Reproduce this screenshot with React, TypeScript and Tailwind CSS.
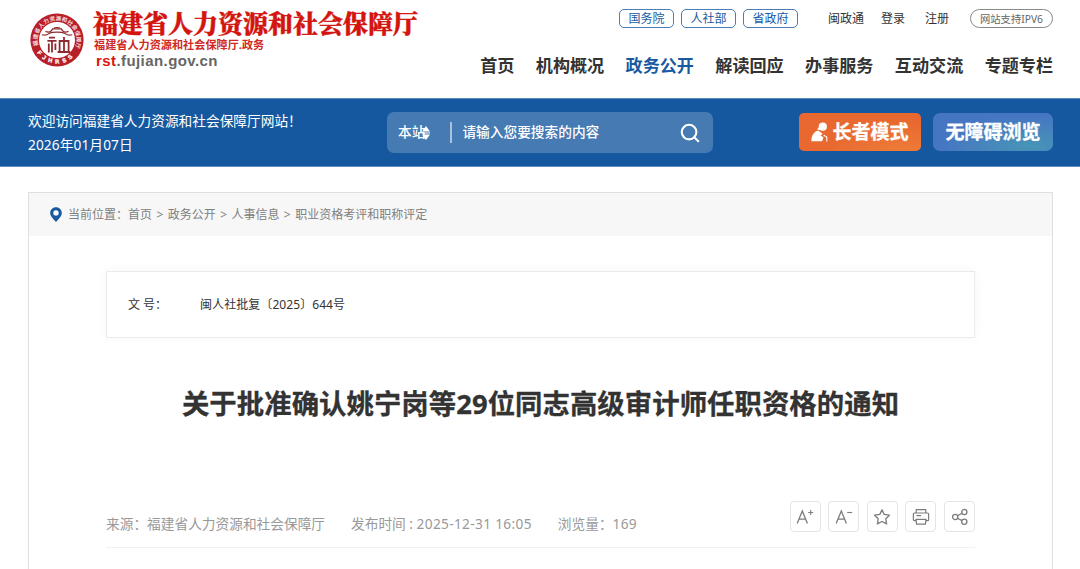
import React from 'react';
import { Search } from 'lucide-react';

const portals = ['国务院', '人社部', '省政府'];

const navItems = ['首页', '机构概况', '政务公开', '解读回应', '办事服务', '互动交流', '专题专栏'];

const crumbs = ['首页', '政务公开', '人事信息', '职业资格考评和职称评定'];

const Seal: React.FC = () => (
  <svg viewBox="0 0 54 54" className="w-[54px] h-[54px] shrink-0 overflow-visible">
    <defs>
      <path id="ringTop" d="M 8.2 32.5 A 19.6 19.6 0 1 1 45.8 32.5" />
      <path id="ringBottom" d="M 5.6 36.5 A 23.4 23.4 0 0 0 48.4 36.5" />
    </defs>
    <circle cx="27" cy="27" r="26.6" fill="#b81f28" />
    <circle cx="27" cy="27" r="18" fill="#fff" />
    <text fontSize="5.6" fontWeight="700" fill="#f6dfe0" textLength="75" lengthAdjust="spacing">
      <textPath href="#ringTop">福建省人力资源和社会保障厅</textPath>
    </text>
    <text fontSize="5.8" fontWeight="700" fill="#fff" stroke="#fff" strokeWidth="0.3" fontFamily="Liberation Sans, sans-serif" letterSpacing="3.6">
      <textPath href="#ringBottom" startOffset="3.5">FJHRSS</textPath>
    </text>
    <g fill="none" stroke="#8f2b30">
      {/* roof */}
      <path d="M15.500 18.400c3 1.300 5.700.6 7.300-2.600h8.400c1.600 3.200 4.300 3.900 7.300 2.600" strokeWidth="1.3" />
      <path d="M11.800 21.800c2.500.8 5.200.4 7.400-1.400 3-1.800 12.600-1.800 15.600 0 2.200 1.800 4.900 2.200 7.400 1.400" strokeWidth="1.2" />
      <path d="M23.800 15.500c.6-1.400 5.800-1.400 6.400 0" strokeWidth="1.1" />
      {/* columns */}
      <path d="M19 24.600h6M17.400 27.800h9.200M22 27.800v11.700M18.800 30.600v8.900M25.400 30.600v6.400M34 24v14.400M29.600 38.800v-10.800h9v10.800M27.600 39h12.600" strokeWidth="1.8" />
    </g>
  </svg>
);

const ElderIcon: React.FC = () => (
  <svg viewBox="0 0 17 20" className="w-[17px] h-[20px] shrink-0" fill="#fff">
    <circle cx="11.8" cy="4.7" r="4.1" />
    <path d="M7.700 4.900L6.200 7.600l3.200.6z" />
    <path d="M.400 19.200C.200 14 3 9.300 7.300 8.400c1.500 1.400 3.200 2.100 4.300 3.100l-2 2.300 2.900 1.500-1.300 3.900z" />
    <path d="M13.800 14.200h.7c.8 0 1.300.5 1.300 1.200v4M12.600 13.600h1.500" fill="none" stroke="#fff" strokeWidth="1.1" />
  </svg>
);

const ToolButton: React.FC<{ children: React.ReactNode }> = ({ children }) => (
  <button className="w-[31px] h-[31px] rounded-[4px] border border-[#e4e4e4] bg-white flex items-center justify-center text-[#7c7c7c]">
    {children}
  </button>
);

const FontSizeIcon: React.FC<{ plus?: boolean }> = ({ plus }) => (
  <svg viewBox="0 0 20 20" className="w-5 h-5" fill="none" stroke="currentColor" strokeWidth="1.3">
    <path d="M2.200 16.600L7.300 3.900l5.100 12.700M4 12.200h6.600" />
    <path d={plus ? 'M13.200 5.500h5M15.700 3v5' : 'M13.200 5.500h5'} strokeWidth="1.1" />
  </svg>
);

const StarIcon: React.FC = () => (
  <svg viewBox="0 0 20 20" className="w-5 h-5" fill="none" stroke="currentColor" strokeWidth="1.3" strokeLinejoin="round">
    <path d="M10 2.900l2.200 4.500 5.200.8-3.600 3.600.8 5-4.600-2.300-4.600 2.300.8-5-3.600-3.600 5.200-.8z" />
  </svg>
);

const PrintIcon: React.FC = () => (
  <svg viewBox="0 0 20 20" className="w-5 h-5" fill="none" stroke="currentColor" strokeWidth="1.2" strokeLinejoin="round">
    <path d="M5.200 5.900V2.700h9.600v3.200" />
    <path d="M5.400 13.700H3.400a1 1 0 0 1-1-1V7a1 1 0 0 1 1-1h13.200a1 1 0 0 1 1 1v5.700a1 1 0 0 1-1 1h-2M5.500 8.700h4.600" />
    <path d="M4.900 12.400h10.200l-.7 4.700H5.600z" />
  </svg>
);

const ShareIcon: React.FC = () => (
  <svg viewBox="0 0 20 20" className="w-5 h-5" fill="none" stroke="currentColor" strokeWidth="1.3">
    <circle cx="5.200" cy="10" r="2.600" />
    <circle cx="14.300" cy="5" r="2.600" />
    <circle cx="14.300" cy="14.800" r="2.600" />
    <path d="M7.500 8.700L12 6.200M7.500 11.200l4.500 2.400" />
  </svg>
);

const Header: React.FC = () => (
  <header className="h-[98px] pl-[30px] pr-[27px] flex justify-between bg-white">
    <div className="flex pt-[13px] gap-[9px]">
      <Seal />
      <div className="-mt-[5px] whitespace-nowrap">
        <div className="text-[25px] leading-[29px] font-black text-[#d3140f] [-webkit-text-stroke:0.4px_#d3140f] font-['Noto_Serif_CJK_SC','Noto_Sans_CJK_SC',serif]">
          福建省人力资源和社会保障厅
        </div>
        <div className="pt-px pl-px text-[11.15px] leading-[14px] font-bold text-[#d02a24]">
          福建省人力资源和社会保障厅.政务
        </div>
        <div className="pl-[3px] text-[15px] leading-[17px] font-bold text-[#666] tracking-[0.42px] font-['Liberation_Sans',sans-serif]">
          <span className="text-[#d9150f]">rst</span>.fujian.gov.cn
        </div>
      </div>
    </div>

    <div className="pt-[9px]">
      <div className="flex items-center justify-end h-[19px] text-[12px] text-[#333]">
        <div className="flex gap-[7px] mr-[30px]">
          {portals.map(p => (
            <a key={p} className="w-[55px] h-[19px] rounded-[5px] border border-[#4a7cb5] text-[#1a5aa2] leading-[17px] text-center">{p}</a>
          ))}
        </div>
        <a>闽政通</a>
        <a className="ml-[17px]">登录</a>
        <a className="ml-5">注册</a>
        <a className="ml-[21px] w-[83px] h-[19px] rounded-full border border-[#888] text-[10.3px] leading-[18px] text-center text-[#666]">
          网站支持IPV6
        </a>
      </div>
      <nav className="mt-[26px] flex justify-end gap-[21.4px] text-[17.1px] leading-[24px] font-bold text-[#333]">
        {navItems.map(item => (
          <a key={item} className={item === '政务公开' ? 'text-[#1859a0]' : ''}>{item}</a>
        ))}
      </nav>
    </div>
  </header>
);

const SearchBar: React.FC = () => (
  <div className="h-[69px] pl-7 pr-[27px] flex items-start bg-[#16589f] border-y border-[#5f8dbe] text-white">
    <div className="w-[359px] pt-[10px] text-[13.7px] leading-6">
      <p>欢迎访问福建省人力资源和社会保障厅网站！</p>
      <p className="tracking-[0.1px]">2026年01月07日</p>
    </div>
    <div className="mt-[13px] w-[326px] h-[41px] rounded-[7px] bg-[#457ab3] flex items-center pl-[11px] pr-[12px] text-[13.7px] font-medium">
      <span>本站</span>
      <svg viewBox="0 0 8 14" className="-ml-[3px] w-2 h-[14px]" fill="#fff">
        <path d="M4 0l4 5.500H0zM4 14l4-5.500H0zM0 6.500h8v1H0z" />
      </svg>
      <span className="ml-[20px] w-[2px] h-[21px] bg-[#a9c2dd]" />
      <span className="ml-[10px]">请输入您要搜索的内容</span>
      <Search className="ml-auto" size={22} strokeWidth={2.3} />
    </div>
    <div className="mt-[14px] ml-auto flex gap-3 text-[19px] font-bold">
      <button className="w-[122px] h-[38px] rounded-[5px] bg-[radial-gradient(ellipse_at_85%_100%,#ee7c38_0%,#e86830_55%)] flex items-center justify-center gap-[4px] whitespace-nowrap">
        <ElderIcon />
        <span className="[-webkit-text-stroke:0.3px_#fff]">长者模式</span>
      </button>
      <button className="w-[120px] h-[38px] rounded-[7px] bg-[radial-gradient(ellipse_at_80%_85%,#4795b7_0%,#4676c2_65%)] text-center [-webkit-text-stroke:0.3px_#fff]">
        无障碍浏览
      </button>
    </div>
  </div>
);

const Breadcrumb: React.FC = () => (
  <div className="h-[43px] pl-[21px] flex items-center bg-[#f7f7f7] text-[12px] text-[#808080]">
    <svg viewBox="0 0 12 15" className="w-3 h-[15px] mr-[6px]">
      <path d="M6 .3C2.700.3.200 2.900.200 6c0 3.700 3.600 6.300 5.800 8.900C8.200 12.300 11.800 9.700 11.800 6 11.800 2.900 9.300.3 6 .3z" fill="#1859a0" />
      <circle cx="6" cy="5.900" r="2.700" fill="#fff" />
    </svg>
    <span>当前位置：</span>
    {crumbs.map((c, i) => (
      <React.Fragment key={c}>
        {i > 0 && <span className="w-[15.7px] text-center">&gt;</span>}
        <a>{c}</a>
      </React.Fragment>
    ))}
  </div>
);

export default function App() {
  return (
    <div className="h-[569px] overflow-hidden bg-white font-['Noto_Sans','Noto_Sans_CJK_SC',sans-serif]">
      <Header />
      <SearchBar />

      <main className="mt-[25px] ml-7 mr-[27px] h-[400px] border border-[#dfdfdf]">
        <Breadcrumb />

        <div className="pl-[77px] pr-[77px]">
          <div className="mt-[35px] h-[67px] pl-[21px] flex items-center border border-[#ebebeb] shadow-[0_0_12px_rgba(0,0,0,0.04)] text-[12px] text-[#333]">
            <span className="w-[72px]">文 号：</span>
            <span className="tracking-[0.07px]">闽人社批复〔2025〕644号</span>
          </div>

          <h1 className="mt-[46px] text-center whitespace-nowrap text-[27.4px] leading-[40px] font-bold text-[#333] tracking-[0.04px] [-webkit-text-stroke:0.3px_#333]">
            关于批准确认姚宁岗等29位同志高级审计师任职资格的通知
          </h1>

          <div className="mt-[77px] h-[47px] flex items-start border-b border-[#f1f1f1] text-[13.7px] text-[#999]">
            <div className="pt-[13px] flex gap-[26px] leading-5 whitespace-nowrap">
              <span>来源：福建省人力资源和社会保障厅</span>
              <span>发布时间 : <span className="tracking-[0.33px]">2025-12-31 16:05</span></span>
              <span>浏览量：<span className="tracking-[0.2px]">169</span></span>
            </div>
            <div className="ml-auto flex gap-[7.6px]">
              <ToolButton><FontSizeIcon plus /></ToolButton>
              <ToolButton><FontSizeIcon /></ToolButton>
              <ToolButton><StarIcon /></ToolButton>
              <ToolButton><PrintIcon /></ToolButton>
              <ToolButton><ShareIcon /></ToolButton>
            </div>
          </div>
        </div>
      </main>
    </div>
  );
}
